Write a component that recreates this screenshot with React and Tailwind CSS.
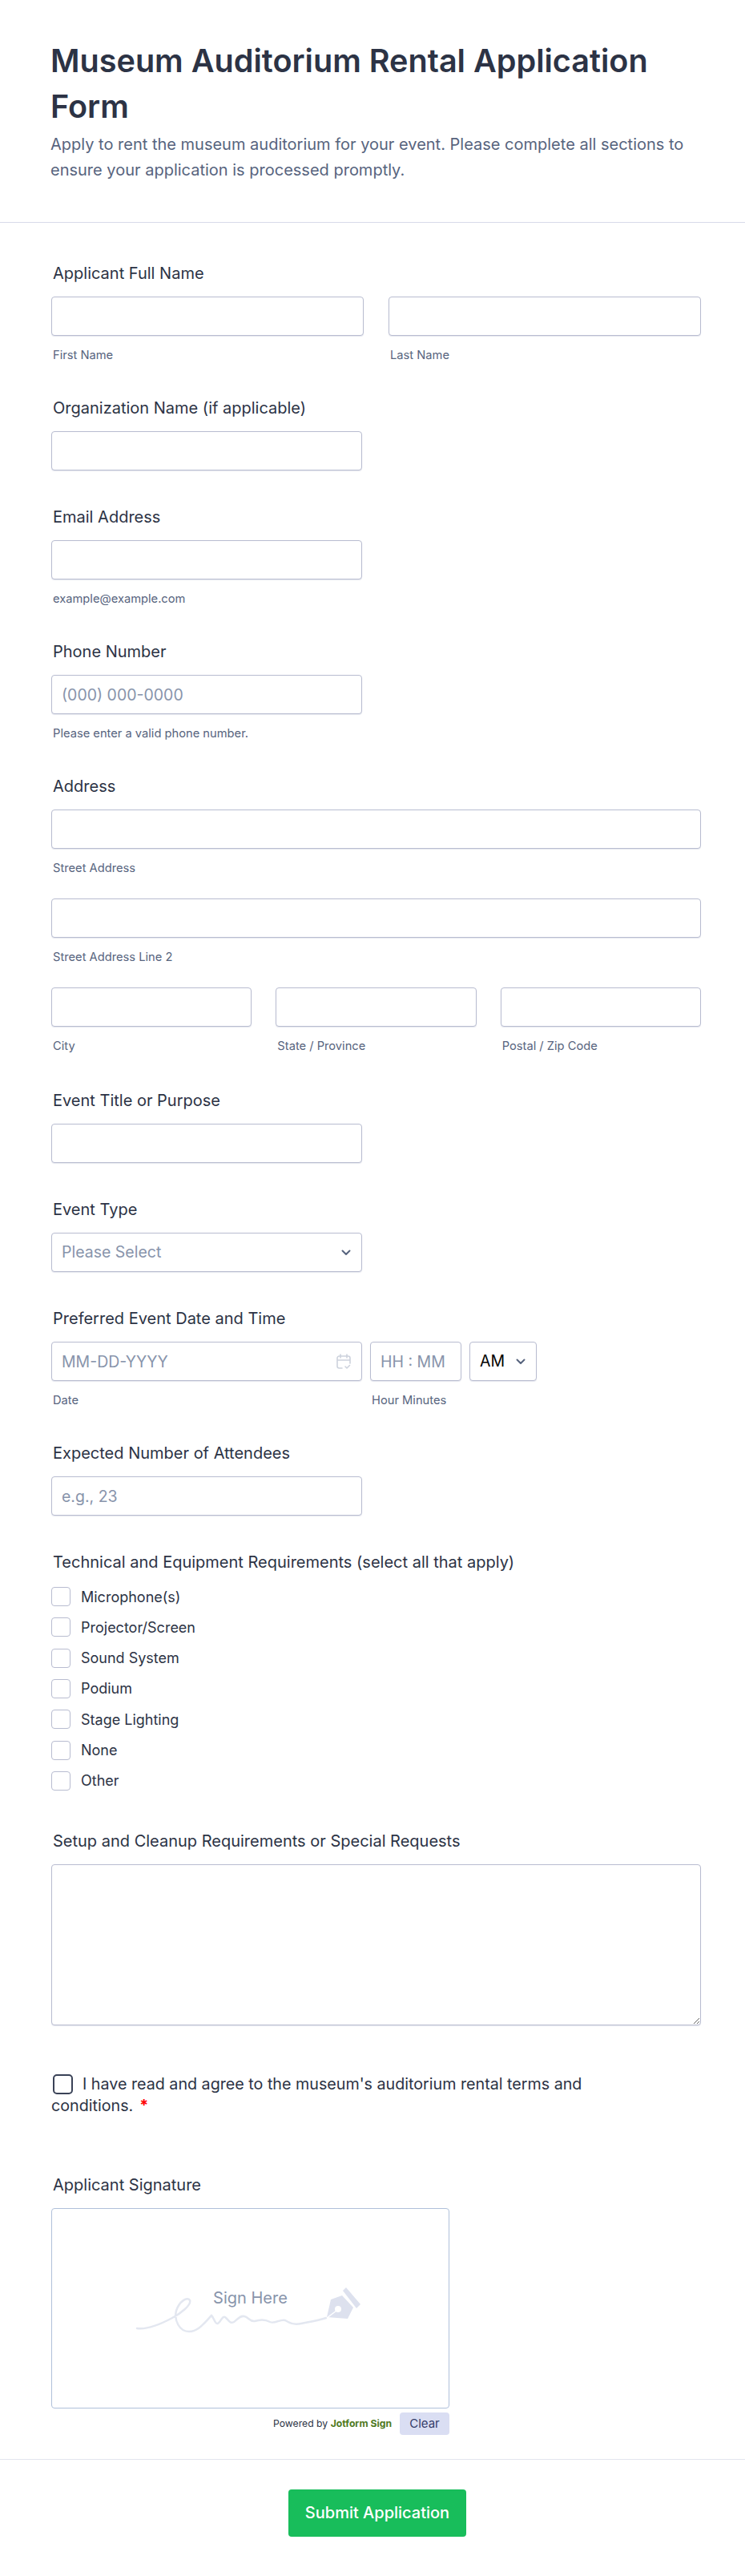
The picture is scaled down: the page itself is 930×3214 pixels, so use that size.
import React from 'react';

const inputClass = 'block h-[49px] w-full rounded border border-[#b8bcd0] bg-white px-3 text-[19.5px] text-[#2c3345] shadow-[0_1px_1px_rgba(184,188,208,0.35)] outline-none placeholder:text-[#8894ab]';

const Label = ({ children }) => (
  <label className="mb-[17px] ml-0.5 box-content block h-6 pt-px text-[20px] leading-6 font-normal text-[#2c3345]">{children}</label>
);

const Sub = ({ children }) => (
  <span className="mt-4 ml-0.5 block h-4 text-[14.7px] leading-4 text-[#57647e]">{children}</span>
);

const Chevron = ({ className }) => (
  <svg viewBox="0 0 12 8" className={className} fill="none" stroke="#57647e" strokeWidth="2" strokeLinecap="round" strokeLinejoin="round">
    <path d="M1.5 1.5 6 6l4.500-4.500" />
  </svg>
);

const options = ['Microphone(s)', 'Projector/Screen', 'Sound System', 'Podium', 'Stage Lighting', 'None', 'Other'];

export default function App() {
  return (
    <div className="min-h-[3214px] bg-white font-['Inter',sans-serif] text-[#2c3345]">
      {/* Header */}
      <header className="h-[278px] border-b border-[#d8dae9] pt-12 pr-[55px] pl-[63px]">
        <h1 className="text-[39.6px] leading-[57px] font-semibold">Museum Auditorium Rental Application Form</h1>
        <p className="mt-0.5 text-[20px] leading-[32px] text-[#57647e]">
          Apply to rent the museum auditorium for your event. Please complete all sections to ensure your application is processed promptly.
        </p>
      </header>

      <form className="pt-[50px] pr-[55px] pl-[64px]">
        <div className="mb-[45px]">
          <Label>Applicant Full Name</Label>
          <div className="grid grid-cols-2 gap-[31px]">
            <div>
              <input className={inputClass} />
              <Sub>First Name</Sub>
            </div>
            <div>
              <input className={inputClass} />
              <Sub>Last Name</Sub>
            </div>
          </div>
        </div>

        <div className="mb-[45px]">
          <Label>Organization Name (if applicable)</Label>
          <input className={`${inputClass} max-w-[388px]`} />
        </div>

        <div className="mb-[45px]">
          <Label>Email Address</Label>
          <input className={`${inputClass} max-w-[388px]`} />
          <Sub>example@example.com</Sub>
        </div>

        <div className="mb-[45px]">
          <Label>Phone Number</Label>
          <input className={`${inputClass} max-w-[388px]`} placeholder="(000) 000-0000" />
          <Sub>Please enter a valid phone number.</Sub>
        </div>

        <div className="mb-[47px]">
          <Label>Address</Label>
          <input className={inputClass} />
          <Sub>Street Address</Sub>
          <input className={`${inputClass} mt-[30px]`} />
          <Sub>Street Address Line 2</Sub>
          <div className="mt-[30px] grid grid-cols-3 gap-[30px]">
            <div>
              <input className={inputClass} />
              <Sub>City</Sub>
            </div>
            <div>
              <input className={inputClass} />
              <Sub>State / Province</Sub>
            </div>
            <div>
              <input className={inputClass} />
              <Sub>Postal / Zip Code</Sub>
            </div>
          </div>
        </div>

        <div className="mb-[45px]">
          <Label>Event Title or Purpose</Label>
          <input className={`${inputClass} max-w-[388px]`} />
        </div>

        <div className="mb-[45px]">
          <Label>Event Type</Label>
          <div className="relative w-[388px]">
            <select className={`${inputClass} appearance-none text-[#8894ab]`} defaultValue="">
              <option value="">Please Select</option>
            </select>
            <Chevron className="pointer-events-none absolute top-[21px] right-[14px] h-2 w-3" />
          </div>
        </div>

        <div className="mb-[45px]">
          <Label>Preferred Event Date and Time</Label>
          <div className="flex gap-2.5">
            <div className="w-[388px]">
              <div className="relative">
                <input className={inputClass} placeholder="MM-DD-YYYY" />
                <svg viewBox="0 0 18 20" className="absolute top-[15px] right-[14px] h-5 w-[18px]" fill="none" stroke="#cdd2dd" strokeWidth="1.6" strokeLinecap="round" strokeLinejoin="round">
                  <path d="M7 18H3.500A2.500 2.500 0 0 1 1 15.500v-10A2.500 2.500 0 0 1 3.500 3h11A2.500 2.500 0 0 1 17 5.500V12M1 8h16M5 1v4M13 1v4M11 16l2 2 3.500-3.500" />
                </svg>
              </div>
              <Sub>Date</Sub>
            </div>
            <div className="w-[114px]">
              <input className={inputClass} placeholder="HH : MM" />
              <Sub>Hour Minutes</Sub>
            </div>
            <div className="relative w-[84px]">
              <select className={`${inputClass} appearance-none text-black`} defaultValue="AM">
                <option>AM</option>
                <option>PM</option>
              </select>
              <Chevron className="pointer-events-none absolute top-[21px] right-[14px] h-2 w-3" />
            </div>
          </div>
        </div>

        <div className="mb-[45px]">
          <Label>Expected Number of Attendees</Label>
          <input className={`${inputClass} max-w-[388px]`} placeholder="e.g., 23" />
        </div>

        <div className="mb-[50px]">
          <Label>Technical and Equipment Requirements (select all that apply)</Label>
          <div className="mt-[19px] flex flex-col gap-[14.33px]">
            {options.map((o) => (
              <label key={o} className="flex h-6 items-center gap-[13px] text-[18px] text-[#2c3345]">
                <input type="checkbox" className="h-6 w-6 appearance-none rounded border border-[#b8bcd0] bg-white" />
                {o}
              </label>
            ))}
          </div>
        </div>

        <div className="mb-[60px]">
          <Label>Setup and Cleanup Requirements or Special Requests</Label>
          <textarea className="block h-[201px] w-full rounded border border-[#b8bcd0] bg-white shadow-[0_1px_1px_rgba(184,188,208,0.35)] outline-none" />
        </div>

        <div className="mb-[72px] h-[54px] w-[720px] text-[19.7px] leading-[27px] text-[#2c3345]">
          <input type="checkbox" className="mr-3 ml-0.5 inline-block h-[25px] w-[25px] appearance-none rounded-[5px] border-2 border-[#3a4257] bg-white align-[-6px]" />
          I have read and agree to the museum's auditorium rental terms and conditions.
          <span className="ml-2 font-bold text-[#ff0000]">*</span>
        </div>

        <div>
          <Label>Applicant Signature</Label>
          <div className="relative h-[250px] w-[497px] rounded border border-[#b0c0da] bg-white">
            <svg viewBox="0 0 340 130" className="absolute top-[65px] left-[75px] h-[130px] w-[340px]" fill="none">
              <path
                d="M31 84C45 86 62 78 75 71C86 65 99 55 97 49C94 44 84 50 80 62C77 74 84 88 96 88C108 88 116 76 124 68C128 72 128 79 132 78C136 76 137 68 141 70C145 73 147 79 152 76C157 72 160 68 165 69C170 70 172 76 178 75C184 73 190 72 197 76C203 79 210 72 216 74C221 77 226 80 236 78C246 76 258 74 267 71"
                stroke="#e3e7f0"
                strokeWidth="2.5"
                strokeLinecap="round"
              />
              <path d="M268 70 273 48 287 43 301 58 294 72Z" fill="#dde1ee" />
              <path d="M292 33 310 54 305 59 288 37Z" fill="#dde1ee" />
              <circle cx="282" cy="60" r="4" fill="#fff" />
              <path d="M268 71 280 62" stroke="#fff" strokeWidth="1.5" />
            </svg>
            <span className="absolute top-[99px] left-0 w-full text-center text-[20px] leading-6 text-[#8894ab]">Sign Here</span>
          </div>
          <div className="mt-[5px] flex w-[497px] items-center justify-end gap-2.5">
            <span className="text-[12.2px] text-[#2c3345]">
              Powered by <b className="font-bold text-[#4f7a1f]">Jotform Sign</b>
            </span>
            <button type="button" className="h-7 w-[62px] rounded bg-[#dadef3] text-[15px] text-[#343c6a]">Clear</button>
          </div>
        </div>
      </form>

      {/* Footer */}
      <div className="mt-[30px] flex justify-center border-t border-[#e3e5ee] pt-[37px] pl-3">
        <button type="button" className="h-[59px] w-[222px] rounded bg-[#18bd5b] text-[20px] font-medium text-white">Submit Application</button>
      </div>
    </div>
  );
}
